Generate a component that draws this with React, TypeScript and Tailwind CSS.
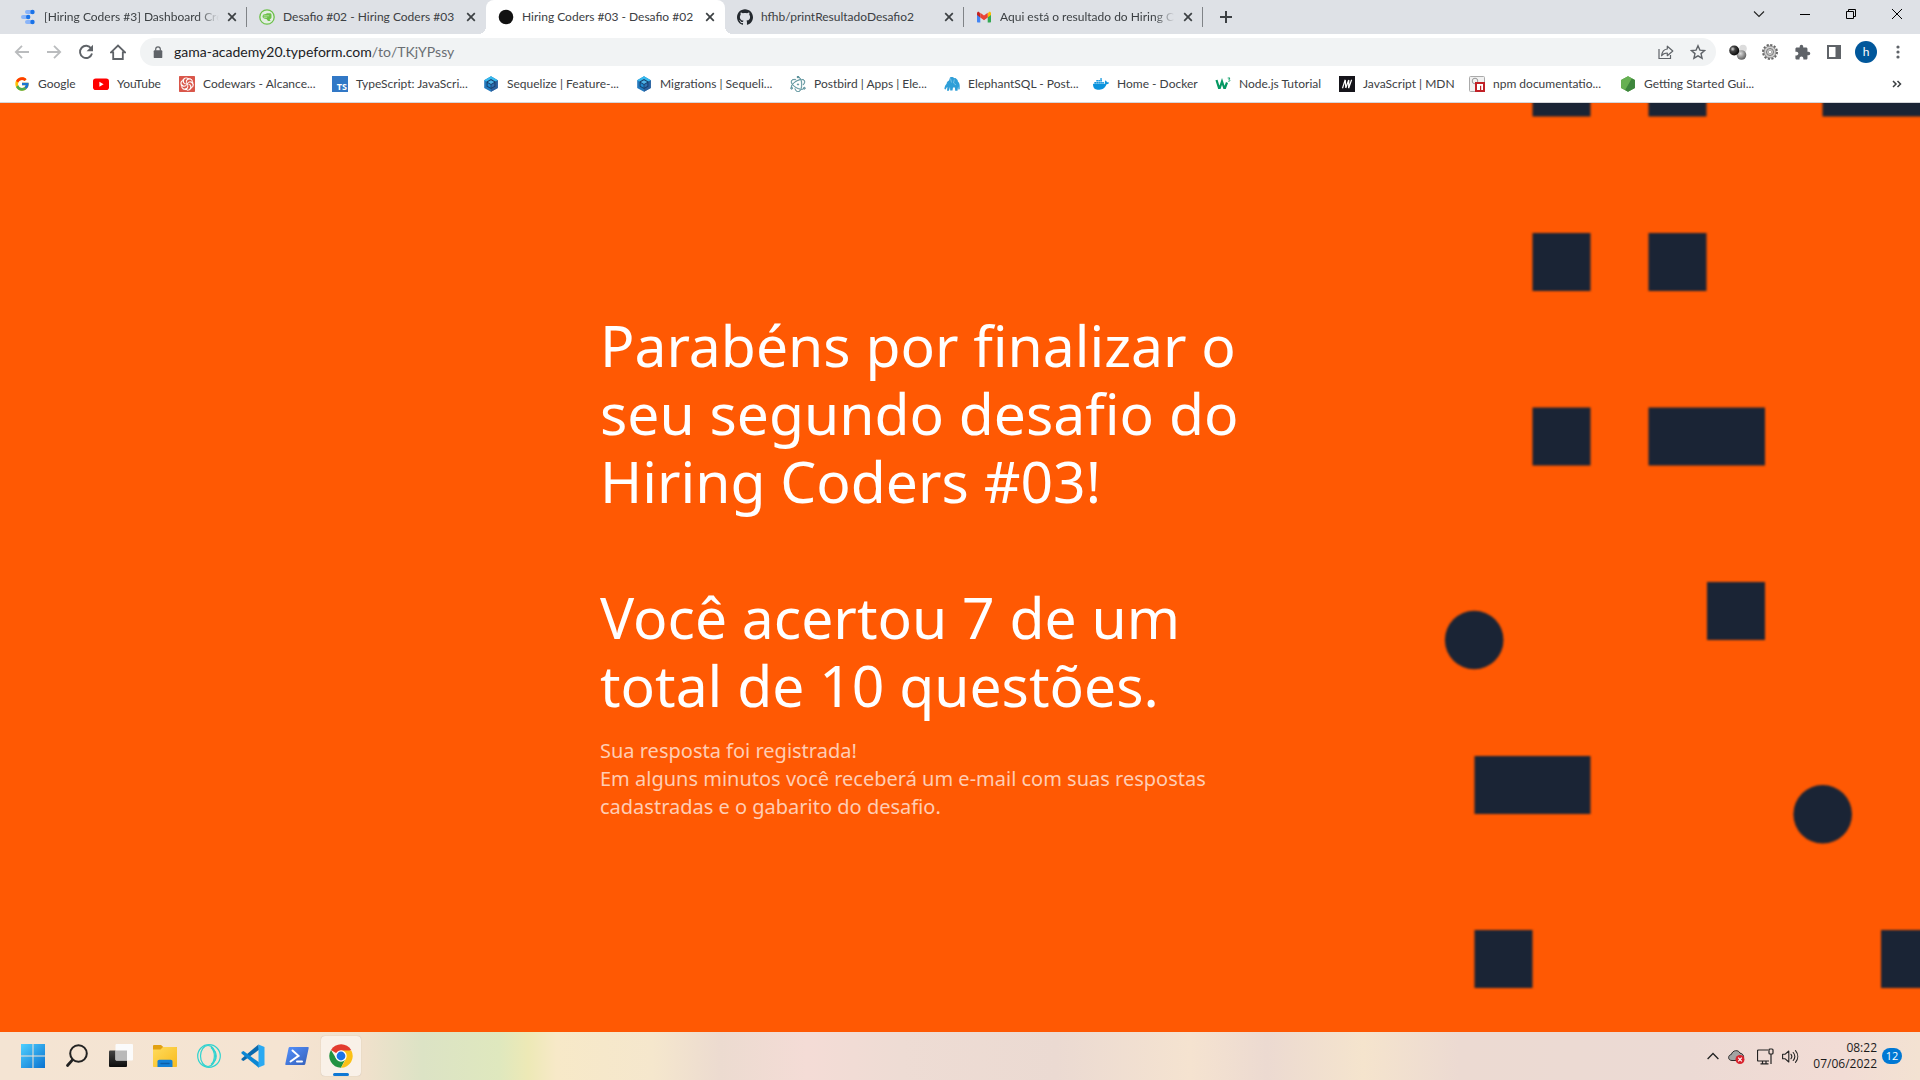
import React from "react";
import { FcGoogle } from "react-icons/fc";
import { SiCodewars, SiDocker, SiElectron, SiGithub } from "react-icons/si";
import { MdExtension } from "react-icons/md";

/* ---------- favicons ---------- */

function LookerIcon() {
  return (
    <svg viewBox="0 0 16 16" className="size-4">
      <g fill="#8ab4f8">
        <rect x="5" y="1" width="9" height="4" rx="2" />
        <rect x="1" y="6" width="9" height="4" rx="2" />
        <rect x="5" y="11" width="9" height="4" rx="2" />
      </g>
      <g fill="#1a73e8">
        <circle cx="12.500" cy="3" r="2.200" />
        <circle cx="8.200" cy="8" r="2.200" />
        <circle cx="12.500" cy="13" r="2.200" />
      </g>
    </svg>
  );
}

function CoderIcon() {
  return (
    <svg viewBox="0 0 16 16" className="size-4">
      <circle cx="8" cy="8" r="7.200" fill="#e3eee2" stroke="#6cc04a" strokeWidth="1.300" />
      <path d="M3.500 7.600C3.500 5.800 5 5 6.800 5L8 4.200h3c.9 0 1.500.7 1.500 1.600v2.400c0 1.200-.8 1.800-1.800 1.800l.8 2H9L7.500 10C5 10 3.500 9.200 3.500 7.600z" fill="#6cc04a" />
      <path d="M4.700 6.800h5.500M4.700 8.300h3.500" stroke="#dff2d8" strokeWidth=".6" />
    </svg>
  );
}

function BlackDot() {
  return (
    <svg viewBox="0 0 16 16" className="size-4">
      <circle cx="8" cy="8" r="7.300" fill="#111" />
    </svg>
  );
}

function GmailIcon() {
  return (
    <svg viewBox="0 0 16 16" className="size-4">
      <path d="M1 4.500v8c0 .6.400 1 1 1h2.300V7.100z" fill="#4285f4" />
      <path d="M15 4.500v8c0 .6-.4 1-1 1h-2.300V7.100z" fill="#34a853" />
      <path d="M1 4.300V6l3.300 2.400V4.900L3.200 3C2.200 2.300 1 3 1 4.300z" fill="#c5221f" />
      <path d="M15 4.300V6l-3.300 2.400V4.900L12.800 3c1-.7 2.200 0 2.200 1.300z" fill="#fbbc04" />
      <path d="M4.300 8.500V3.700L8 6.500l3.700-2.800v4.800L8 11.300z" fill="#ea4335" />
    </svg>
  );
}

function YouTubeIcon() {
  return (
    <svg viewBox="0 0 16 16" className="size-4">
      <rect y="2.500" width="16" height="11.500" rx="2.800" fill="#f00" />
      <path d="M6.400 5.800v4.900l4.200-2.450z" fill="#fff" />
    </svg>
  );
}

function TsIcon() {
  return (
    <span className="flex size-4 items-end justify-end bg-[#3178c6] pr-px font-['Open_Sans',sans-serif] text-[9px] leading-[11px] font-bold text-white">
      TS
    </span>
  );
}

function SequelizeIcon() {
  return (
    <svg viewBox="0 0 16 16" className="size-4">
      <path d="M8 .3l6.800 3.900v7.700L8 15.800l-6.800-3.900V4.200z" fill="#2379bd" />
      <path d="M8 .3l6.800 3.900L8 8 1.200 4.200z" fill="#35b9ee" />
      <path d="M8 8l6.800-3.800v7.700L8 15.800z" fill="#2c5f9c" />
      <path d="M8 3l4.400 2.500v5L8 13l-4.400-2.500v-5z" fill="#173f6d" />
      <path d="M8 4.300l3.200 1.800L8 7.900 4.800 6.100z" fill="#4fb4e8" />
      <path d="M4.600 7L7.600 8.700v3L4.600 10z" fill="#1f8ad0" />
      <path d="M8.400 8.700l3-1.700v3l-3 1.700z" fill="#2f6fb0" />
    </svg>
  );
}

function ElephantIcon() {
  return (
    <svg viewBox="0 0 16 16" className="size-4">
      <path
        d="M6 1.500C7.500.6 9.400 1 10.300 2.300c.7-.4 1.700-.2 2.200.6.900.5 1.400 1.500 1.400 2.600 1.100 1 1.800 2.400 1.800 4.200v3.500l-1.300.2-.3-3-.6 4.300h-2.300l-.3-3.200H9l-.5 3H6.200L6 11 4.900 14.800H3L3.400 11c-.9.600-1.300 1.500-1.600 2.600L.4 13C.6 10.300 1.500 9 2.600 7.800 2.800 6.300 3.700 5 5 4.600z"
        fill="#2f9fd8"
      />
      <path d="M6.500 2.500l1 4M10.300 3.500l-.8 3.500 2.500 2" fill="none" stroke="#a5d8f0" strokeWidth=".6" />
    </svg>
  );
}

function W3Icon() {
  return (
    <svg viewBox="0 0 16 16" className="size-4" fill="none">
      <path d="M1.500 4l2.500 8h.8L7 5.500 9.200 12h.8l2-5.500" stroke="#059862" strokeWidth="2.200" />
      <path d="M12.700 2h2.300l-1.200 1.400c1.800.2 1.400 2.300-.6 1.800" stroke="#059862" strokeWidth=".9" />
    </svg>
  );
}

function MdnIcon() {
  return (
    <svg viewBox="0 0 16 16" className="size-4">
      <rect width="16" height="16" fill="#15141a" />
      <path d="M3.500 12.300L6.200 3.700M6.300 4l.5 8M6.800 12l2.900-8M9.800 4l-.2 8M9.600 12.300L12.600 3.700" fill="none" stroke="#fff" strokeWidth="1.200" />
    </svg>
  );
}

function NpmDocIcon() {
  return (
    <svg viewBox="0 0 16 16" className="size-4">
      <rect x=".5" y=".5" width="15" height="15" rx="1" fill="#f1f1f1" stroke="#aaa" />
      <circle cx="6" cy="5" r="2.800" fill="none" stroke="#999" />
      <rect x="6" y="6" width="10" height="10" fill="#c12127" />
      <path d="M8 14V8h6v6h-1.800v-4.200H11V14z" fill="#fff" />
    </svg>
  );
}

function NodeIcon() {
  return (
    <svg viewBox="0 0 16 16" className="size-4">
      <path d="M8 .2l6.900 3.900v7.800L8 15.800l-6.900-3.900V4.100z" fill="#539e43" />
      <path d="M8 .2l6.900 3.900v7.800L8 15.800 5 14.100 11.800 2.300z" fill="#3e863d" />
      <path d="M1.100 4.100L8 .2l3.800 2.100L5 14.100l-3.900-2.200z" fill="#66b052" />
    </svg>
  );
}

/* ---------- tab strip ---------- */

function CloseGlyph() {
  return (
    <svg viewBox="0 0 10 10" className="size-[10px]" stroke="#3c4043" strokeWidth="1.700">
      <path d="M1.200 1.200l7.600 7.600M8.800 1.200L1.200 8.800" />
    </svg>
  );
}

type TabData = {
  title: string;
  icon: React.ReactNode;
  active?: boolean;
  divider?: boolean;
  fade?: boolean;
};

const tabs: TabData[] = [
  { title: "[Hiring Coders #3] Dashboard Cre", icon: <LookerIcon />, divider: true, fade: true },
  { title: "Desafio #02 - Hiring Coders #03", icon: <CoderIcon /> },
  { title: "Hiring Coders #03 - Desafio #02", icon: <BlackDot />, active: true },
  { title: "hfhb/printResultadoDesafio2", icon: <SiGithub className="size-4 text-[#24292f]" />, divider: true },
  { title: "Aqui está o resultado do Hiring C", icon: <GmailIcon />, divider: true, fade: true },
];

function Tab({ title, icon, active, divider, fade }: TabData) {
  return (
    <div
      className={
        active
          ? "relative flex h-[34px] w-[239px] items-center rounded-t-lg bg-white pl-3"
          : "relative flex h-[34px] w-[239px] items-center pl-3"
      }
    >
      <button type="button" role="tab" aria-selected={!!active} className="flex min-w-0 flex-1 items-center gap-2 text-left">
        <span className="shrink-0">{icon}</span>
        <span
          className={
            fade
              ? "flex-1 overflow-hidden whitespace-nowrap [mask-image:linear-gradient(to_right,#000_88%,transparent)]"
              : "flex-1 overflow-hidden whitespace-nowrap"
          }
        >
          {title}
        </span>
      </button>
      <button type="button" aria-label={"Fechar " + title} className="mr-[6px] ml-1 flex size-[18px] shrink-0 items-center justify-center rounded-full">
        <CloseGlyph />
      </button>
      {divider && <span className="absolute top-[7px] right-0 h-5 w-px bg-[#808387]" />}
      {active && (
        <>
          <span className="absolute bottom-0 -left-2 size-2 bg-[radial-gradient(circle_at_0_0,#dee1e6_8px,#fff_8px)]" />
          <span className="absolute -right-2 bottom-0 size-2 bg-[radial-gradient(circle_at_100%_0,#dee1e6_8px,#fff_8px)]" />
        </>
      )}
    </div>
  );
}

function TabStrip() {
  return (
    <div className="flex h-[34px] items-center bg-[#dee1e6] pl-2 text-xs text-[#3c4043]">
      <div role="tablist" className="flex">
        {tabs.map((t) => (
          <Tab key={t.title} {...t} />
        ))}
      </div>
      <button type="button" aria-label="Nova guia" className="ml-[9px] flex size-7 items-center justify-center">
        <svg viewBox="0 0 12 12" className="size-3" stroke="#3c4043" strokeWidth="2">
          <path d="M6 0v12M0 6h12" />
        </svg>
      </button>
      <div className="ml-auto flex h-7 items-center self-start">
        <button type="button" aria-label="Pesquisar guias" className="flex h-7 w-[46px] items-center justify-center">
          <svg viewBox="0 0 12 12" className="size-3" fill="none" stroke="#222" strokeWidth="1.100">
            <path d="M1 3.500l5 5 5-5" />
          </svg>
        </button>
        <button type="button" aria-label="Minimizar" className="flex h-7 w-[46px] items-center justify-center">
          <span className="h-px w-[10px] bg-black" />
        </button>
        <button type="button" aria-label="Restaurar" className="flex h-7 w-[46px] items-center justify-center">
          <svg viewBox="0 0 10 10" className="size-[10px]" fill="none" stroke="#000">
            <path d="M.5 2.500h7v7h-7zM2.500 2.500v-2h7v7h-2" />
          </svg>
        </button>
        <button type="button" aria-label="Fechar" className="flex h-7 w-[46px] items-center justify-center">
          <svg viewBox="0 0 10 10" className="size-[10px]" stroke="#000">
            <path d="M0 0l10 10M10 0L0 10" />
          </svg>
        </button>
      </div>
    </div>
  );
}

/* ---------- toolbar ---------- */

function NavButton({ label, children }: { label: string; children: React.ReactNode }) {
  return (
    <button type="button" aria-label={label} className="flex size-7 shrink-0 items-center justify-center">
      {children}
    </button>
  );
}

function Toolbar() {
  return (
    <div className="flex h-9 items-center bg-white pr-2 pl-2">
      <div className="flex gap-1">
        <NavButton label="Voltar">
          <svg viewBox="0 0 16 16" className="size-4" fill="none" stroke="#babcbe" strokeWidth="1.800">
            <path d="M15 8H2.500M8 1.800L1.800 8 8 14.200" />
          </svg>
        </NavButton>
        <NavButton label="Avançar">
          <svg viewBox="0 0 16 16" className="size-4" fill="none" stroke="#babcbe" strokeWidth="1.800">
            <path d="M1 8h12.500M8 1.800L14.200 8 8 14.200" />
          </svg>
        </NavButton>
        <NavButton label="Recarregar">
          <svg viewBox="0 0 16 16" className="size-4" fill="none" stroke="#5f6368" strokeWidth="1.900">
            <path d="M13.200 4.500A6.100 6.100 0 1 0 14 9.500" />
            <path d="M15 .8v6.400H8.600z" fill="#5f6368" stroke="none" />
          </svg>
        </NavButton>
        <NavButton label="Página inicial">
          <svg viewBox="0 0 16 16" className="size-4" fill="none" stroke="#5f6368" strokeWidth="1.800">
            <path d="M1 8.300L8 1.500l7 6.800h-2.200V15H3.200V8.300z" />
          </svg>
        </NavButton>
      </div>
      <div className="ml-2 flex h-7 flex-1 items-center rounded-full bg-[#f1f3f4] pr-1 pl-3">
        <svg viewBox="0 0 12 14" className="h-3 w-3 shrink-0">
          <rect x="1" y="5" width="10" height="9" rx="1" fill="#5f6368" />
          <path d="M3.300 5.500V3.700a2.700 2.700 0 0 1 5.400 0v1.800" fill="none" stroke="#5f6368" strokeWidth="1.400" />
        </svg>
        <a href="#endereco" className="ml-[10px] flex-1 text-sm text-[#6a6e73]">
          <span className="text-[#202124]">gama-academy20.typeform.com</span>/to/TKjYPssy
        </a>
        <div className="flex gap-1">
          <NavButton label="Compartilhar">
            <svg viewBox="0 0 16 16" className="size-4" fill="none" stroke="#5f6368" strokeWidth="1.200">
              <path d="M1 5v9.500h11.500V11" />
              <path d="M9.300 2.200L14.800 7l-5.500 4.700V9C6.500 9 4.700 10 3.600 11.800 4 8 6 5.300 9.300 5z" strokeLinejoin="round" />
            </svg>
          </NavButton>
          <NavButton label="Adicionar aos favoritos">
            <svg viewBox="0 0 16 16" className="size-4" fill="none" stroke="#5f6368" strokeWidth="1.400">
              <path d="M8 1.800l1.900 4.300 4.700.4-3.600 3.100 1.100 4.600L8 11.800l-4.100 2.400L5 9.600 1.400 6.500l4.700-.4z" />
            </svg>
          </NavButton>
        </div>
      </div>
      <div className="ml-2 flex gap-1">
        <NavButton label="Extensão de esferas">
          <svg viewBox="0 0 18 16" className="h-4 w-[18px]">
            <defs>
              <radialGradient id="ballDark" cx=".35" cy=".35" r=".6">
                <stop offset="0" stopColor="#ddd" />
                <stop offset=".4" stopColor="#444" />
                <stop offset="1" stopColor="#111" />
              </radialGradient>
              <radialGradient id="ballLight" cx=".4" cy=".35" r=".7">
                <stop offset="0" stopColor="#ddd" />
                <stop offset="1" stopColor="#555" />
              </radialGradient>
            </defs>
            <circle cx="14" cy="4.500" r="3.800" fill="#dcdcdc" />
            <circle cx="12.500" cy="11" r="4.800" fill="url(#ballLight)" />
            <circle cx="5.200" cy="6.500" r="5" fill="url(#ballDark)" />
          </svg>
        </NavButton>
        <NavButton label="Extensão de engrenagem">
          <svg viewBox="0 0 16 16" className="size-4" fill="none">
            <circle cx="8" cy="8" r="7" stroke="#666" strokeWidth="2" strokeDasharray="2.200 1.465" />
            <circle cx="8" cy="8" r="6" fill="#cfcfcf" stroke="#777" strokeWidth=".8" />
            <circle cx="8" cy="8" r="3.500" stroke="#7a7a7a" />
            <circle cx="8" cy="8" r="1.700" fill="#fff" stroke="#888" strokeWidth=".6" />
          </svg>
        </NavButton>
        <NavButton label="Extensões">
          <MdExtension className="size-[17px] text-[#5f6368]" />
        </NavButton>
        <NavButton label="Painel lateral">
          <svg viewBox="0 0 14 14" className="size-[14px]">
            <path d="M0 0h14v14H0zM2 2v10h6.500V2z" fill="#5f6368" fillRule="evenodd" />
          </svg>
        </NavButton>
        <NavButton label="Perfil">
          <span className="flex size-[22px] items-center justify-center rounded-full bg-[#01579b] text-xs text-white">h</span>
        </NavButton>
        <NavButton label="Menu">
          <svg viewBox="0 0 4 14" className="h-[14px] w-1" fill="#5f6368">
            <circle cx="2" cy="2" r="1.600" />
            <circle cx="2" cy="7" r="1.600" />
            <circle cx="2" cy="12" r="1.600" />
          </svg>
        </NavButton>
      </div>
    </div>
  );
}

/* ---------- bookmarks ---------- */

const bookmarks: { label: string; icon: React.ReactNode; width: string }[] = [
  { label: "Google", icon: <FcGoogle className="size-4" />, width: "w-[79px]" },
  { label: "YouTube", icon: <YouTubeIcon />, width: "w-[86px]" },
  { label: "Codewars - Alcance...", icon: <SiCodewars className="size-4 text-[#d9564a]" />, width: "w-[153px]" },
  { label: "TypeScript: JavaScri...", icon: <TsIcon />, width: "w-[151px]" },
  { label: "Sequelize | Feature-...", icon: <SequelizeIcon />, width: "w-[153px]" },
  { label: "Migrations | Sequeli...", icon: <SequelizeIcon />, width: "w-[154px]" },
  {
    label: "Postbird | Apps | Ele...",
    icon: <SiElectron className="size-4 text-[#47848f]" stroke="#47848f" strokeWidth="0.700" />,
    width: "w-[154px]",
  },
  { label: "ElephantSQL - Post...", icon: <ElephantIcon />, width: "w-[149px]" },
  { label: "Home - Docker", icon: <SiDocker className="size-4 text-[#0b93dd]" />, width: "w-[122px]" },
  { label: "Node.js Tutorial", icon: <W3Icon />, width: "w-[124px]" },
  { label: "JavaScript | MDN", icon: <MdnIcon />, width: "w-[130px]" },
  { label: "npm documentatio...", icon: <NpmDocIcon />, width: "w-[151px]" },
  { label: "Getting Started Gui...", icon: <NodeIcon />, width: "w-[151px]" },
];

function BookmarkBar() {
  return (
    <nav aria-label="Favoritos" className="flex h-[33px] items-center border-b border-[#d5d7da] bg-white pr-[18px] pb-1 pl-[14px] text-xs text-[#3c4043]">
      {bookmarks.map((b) => (
        <a key={b.label} href="#favorito" className={b.width + " flex shrink-0 items-center gap-2 whitespace-nowrap"}>
          <span className="shrink-0">{b.icon}</span>
          {b.label}
        </a>
      ))}
      <button type="button" aria-label="Mais favoritos" className="ml-auto">
        <svg viewBox="0 0 10 8" className="h-2 w-[10px]" fill="none" stroke="#3c4043" strokeWidth="1.500">
          <path d="M1 1l3 3-3 3M5.500 1l3 3-3 3" />
        </svg>
      </button>
    </nav>
  );
}

/* ---------- page ---------- */

function Pattern() {
  return (
    <svg viewBox="0 0 500 929" preserveAspectRatio="xMaxYMin slice" className="absolute top-0 right-0 h-full" aria-hidden="true">
      <g fill="#1a2435" className="blur-[1px]">
        <rect x="112.500" y="-45" width="58" height="58.500" />
        <rect x="228.500" y="-45" width="58" height="58.500" />
        <rect x="402.500" y="-45" width="116" height="58.500" />
        <rect x="112.500" y="130" width="58" height="58" />
        <rect x="228.500" y="130" width="58" height="58" />
        <rect x="112.500" y="304.500" width="58" height="58" />
        <rect x="228.500" y="304.500" width="116.500" height="58" />
        <rect x="287" y="479" width="58" height="58" />
        <circle cx="54.200" cy="537" r="29.300" />
        <rect x="54.500" y="653" width="116" height="58" />
        <circle cx="402.700" cy="711.300" r="29.300" />
        <rect x="54.500" y="827" width="58" height="58" />
        <rect x="461" y="827" width="58" height="58" />
      </g>
    </svg>
  );
}

function ThankYou() {
  return (
    <main className="relative flex flex-1 items-center justify-center overflow-hidden bg-[#ff5903] pb-1 font-['Noto_Sans',sans-serif]">
      <Pattern />
      <div className="relative w-[720px]">
        <h1 className="text-[57px] leading-[68px] text-white">
          Parabéns por finalizar o<br />
          seu segundo desafio do<br />
          Hiring Coders #03!
          <br />
          <br />
          Você acertou 7 de um
          <br />
          total de 10 questões.
        </h1>
        <p className="mt-[18px] text-xl leading-7 text-[#ffcdb4]">
          Sua resposta foi registrada!
          <br />
          Em alguns minutos você receberá um e-mail com suas respostas
          <br />
          cadastradas e o gabarito do desafio.
        </p>
      </div>
    </main>
  );
}

/* ---------- taskbar ---------- */

function WindowsLogo() {
  return (
    <svg viewBox="0 0 24 24" className="size-6">
      <defs>
        <linearGradient id="win" x1="0" y1="0" x2="1" y2="1">
          <stop offset="0" stopColor="#4fd0ff" />
          <stop offset="1" stopColor="#0a72d0" />
        </linearGradient>
      </defs>
      <path d="M0 0h11.500v11.500H0zM12.500 0H24v11.500H12.500zM0 12.500h11.500V24H0zM12.500 12.500H24V24H12.500z" fill="url(#win)" />
    </svg>
  );
}

function SearchGlyph() {
  return (
    <svg viewBox="0 0 24 24" className="size-6" fill="none" stroke="#222" strokeLinecap="round">
      <circle cx="13.500" cy="9.500" r="8.300" strokeWidth="2" />
      <path d="M7.500 15.800L2.500 21.500" strokeWidth="2.800" />
    </svg>
  );
}

function TaskViewGlyph() {
  return (
    <svg viewBox="0 0 24 24" className="size-6">
      <defs>
        <linearGradient id="tvDark" x1="0" y1="0" x2="0" y2="1">
          <stop offset="0" stopColor="#444" />
          <stop offset="1" stopColor="#0c0c0c" />
        </linearGradient>
      </defs>
      <rect x="0" y="6.500" width="18" height="16.500" rx="1" fill="url(#tvDark)" />
      <rect x="6.500" y="0" width="17.500" height="16.500" rx="1" fill="#fbfbfb" />
      <path d="M6.500 6.500H18v10H7.500a1 1 0 0 1-1-1z" fill="#b9b9b9" />
    </svg>
  );
}

function FolderIcon() {
  return (
    <svg viewBox="0 0 24 24" className="size-6">
      <defs>
        <linearGradient id="fold" x1="0" y1="0" x2="1" y2="1">
          <stop offset="0" stopColor="#ffdb5c" />
          <stop offset="1" stopColor="#f8bb1f" />
        </linearGradient>
      </defs>
      <path d="M0 2.200C0 1.500.5 1 1.200 1H8l2.300 2H23c.6 0 1 .4 1 1v4H0z" fill="#e2a011" />
      <path d="M0 5.500h7.500L10 3h13c.6 0 1 .4 1 1v18c0 .6-.4 1-1 1H1c-.6 0-1-.4-1-1z" fill="url(#fold)" />
      <path d="M4.500 23v-5.500c0-1 .8-1.800 1.800-1.800h11.400c1 0 1.800.8 1.800 1.800V23z" fill="#1480d6" />
      <path d="M8 19.500h8" stroke="#0c5ea8" strokeWidth="1.500" strokeLinecap="round" />
    </svg>
  );
}

function OperaIcon() {
  return (
    <svg viewBox="0 0 24 24" className="size-6" fill="none" stroke="#2fd3d0" strokeWidth="1.200">
      <circle cx="12" cy="12" r="11.300" />
      <ellipse cx="11" cy="12" rx="7.500" ry="10.500" />
      <path d="M14 3.500c7 4.500 7 12.500 0 17M14 3.500c4.500 4 4.500 13 0 17" />
    </svg>
  );
}

function VsCodeIcon() {
  return (
    <svg viewBox="0 0 24 24" className="size-6">
      <path d="M17.500.5L.5 14.800v1.300l2 .9L18 5.800z" fill="#0a69ad" />
      <path d="M.5 8l2-.9L18 18.300v5.200h-.5L.5 9.500z" fill="#0b87d4" />
      <path d="M17.500.4L23.500 3v18l-6 2.600z" fill="#2aa9f2" />
    </svg>
  );
}

function PowerShellIcon() {
  return (
    <svg viewBox="0 0 24 20" className="h-5 w-6">
      <defs>
        <linearGradient id="ps" x1="0" y1="0" x2="1" y2="1">
          <stop offset="0" stopColor="#5391fe" />
          <stop offset="1" stopColor="#3560b8" />
        </linearGradient>
      </defs>
      <path d="M4.800 1h18c.7 0 1 .5.900 1L20.300 18c-.2.600-.7 1-1.300 1H1.200c-.7 0-1-.5-.9-1L3.600 2c.1-.6.600-1 1.200-1z" fill="url(#ps)" />
      <path d="M7.500 4.500l6 5.300-8 5.700M12 15.500h5" fill="none" stroke="#fff" strokeWidth="2" strokeLinecap="round" />
    </svg>
  );
}

function ChromeIcon() {
  return (
    <svg viewBox="0 0 24 24" className="size-6">
      <path d="M12 12L2 6a11.700 11.700 0 0 1 20.200 0z" fill="#e33b2e" />
      <path d="M2 6l5.300 8.700 9.300 0L12 23.700A11.700 11.700 0 0 1 2 6z" fill="#229342" />
      <path d="M12 6.400h10.300a11.700 11.700 0 0 1-10.300 17.300l5-9z" fill="#fbc116" />
      <circle cx="12" cy="12" r="5.700" fill="#fff" />
      <circle cx="12" cy="12" r="4.400" fill="#1a73e8" />
    </svg>
  );
}

const apps = [
  { name: "Iniciar", icon: <WindowsLogo /> },
  { name: "Pesquisar", icon: <SearchGlyph /> },
  { name: "Visão de tarefas", icon: <TaskViewGlyph /> },
  { name: "Explorador de Arquivos", icon: <FolderIcon /> },
  { name: "Opera", icon: <OperaIcon /> },
  { name: "Visual Studio Code", icon: <VsCodeIcon /> },
  { name: "PowerShell", icon: <PowerShellIcon /> },
];

function Taskbar() {
  return (
    <footer className="flex h-12 items-center bg-[linear-gradient(to_right,#f4e4d3_0%,#f5e4d2_15%,#f0e1cc_19%,#dce3c5_22%,#dfe8be_26%,#ede9b6_27.5%,#f7e9c8_29%,#f5e7cd_34%,#ecdbd0_37.500%,#f4dcd6_42%,#eedcd4_47%,#ebdad2_55%,#f5e3d0_62%,#ecdad1_66%,#f5e4cd_71%,#ecdad2_76%,#ecdad4_88%,#f2dcd5_96%,#f3e2d2_100%)] pr-[18px] pl-[13px] font-['Open_Sans',sans-serif] text-[#1b1b1b]">
      <div className="flex items-center gap-1">
        {apps.map((a) => (
          <button key={a.name} type="button" aria-label={a.name} className="flex size-10 items-center justify-center">
            {a.icon}
          </button>
        ))}
        <button type="button" aria-label="Google Chrome" className="relative flex size-10 items-center justify-center rounded bg-[#f9f1e8] shadow-[0_0_1px_#b9a99a]">
          <ChromeIcon />
          <span className="absolute bottom-0 left-3 h-[3px] w-4 rounded-full bg-[#0f78d4]" />
        </button>
      </div>
      <div className="ml-auto flex items-center">
        <button type="button" aria-label="Mostrar ícones ocultos" className="mr-[9px] flex h-8 w-3 items-center">
          <svg viewBox="0 0 12 8" className="h-2 w-3" fill="none" stroke="#222" strokeWidth="1.300">
            <path d="M.6 7L6 1.500 11.400 7" />
          </svg>
        </button>
        <button type="button" aria-label="OneDrive" className="mr-3">
          <svg viewBox="0 0 17 15" className="h-[15px] w-[17px]">
            <path d="M4 11.500C-.5 11.500-.3 6 3.300 5.500 4.500 1 10.500.3 12 4.200c3 .2 3.800 2.700 3.600 4.800-.3 1.600-1 2.500-2.600 2.500z" fill="#a3a3a3" stroke="#2b2b2b" />
            <circle cx="12" cy="10.500" r="4.500" fill="#d9232e" />
            <path d="M10.200 8.700l3.600 3.600M13.800 8.700l-3.600 3.600" stroke="#fff" strokeWidth="1.200" />
          </svg>
        </button>
        <button type="button" aria-label="Rede" className="mr-2">
          <svg viewBox="0 0 17 17" className="size-[17px]" fill="none" stroke="#222" strokeWidth="1.200">
            <path d="M11 2H1.500c-.6 0-1 .4-1 1v9c0 .6.400 1 1 1H12M5.500 13v2.800M9 13v2.800M3.500 15.900h8" />
            <rect x="12" y="1" width="4" height="5" rx="1" />
            <path d="M14 6v10" />
          </svg>
        </button>
        <button type="button" aria-label="Volume" className="mr-[14px]">
          <svg viewBox="0 0 17 15" className="h-[15px] w-[17px]" fill="none" stroke="#222" strokeWidth="1.100">
            <path d="M.6 5.200h2.600L6.800 2v11L3.200 9.800H.6z" strokeLinejoin="round" />
            <path d="M9 5.300c1 1.300 1 3.100 0 4.400M11.200 3.500c2 2.400 2 5.600 0 8M13.500 1.700c3 3.500 3 8.100 0 11.600" strokeLinecap="round" />
          </svg>
        </button>
        <button type="button" aria-label="12 notificações, 08:22, 07/06/2022" className="flex items-center gap-[5px]">
          <span className="flex flex-col text-right text-xs leading-4">
            <span>08:22</span>
            <span>07/06/2022</span>
          </span>
          <span className="flex h-4 w-5 items-center justify-center rounded-full bg-[#0078d4] text-[11px] leading-4 text-white">12</span>
        </button>
      </div>
    </footer>
  );
}

export default function App() {
  return (
    <div className="flex h-screen flex-col overflow-hidden font-['Lato',sans-serif]">
      <header>
        <TabStrip />
        <Toolbar />
        <BookmarkBar />
      </header>
      <ThankYou />
      <Taskbar />
    </div>
  );
}
